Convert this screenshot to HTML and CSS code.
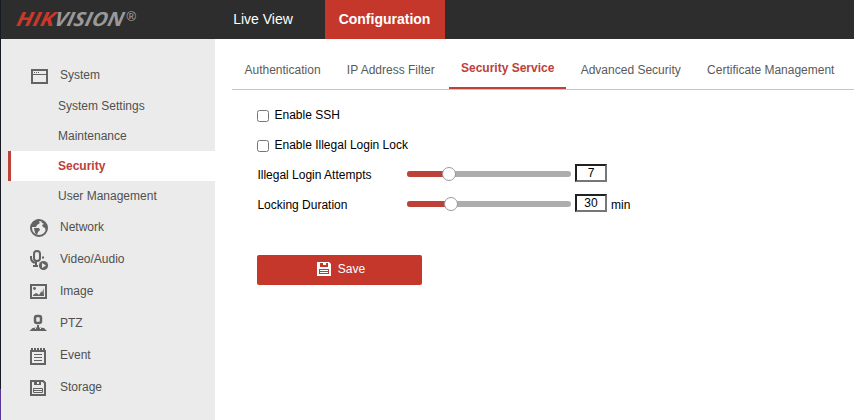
FILE: index.html
```html
<!DOCTYPE html>
<html lang="en">
<head>
<meta charset="utf-8">
<title>Configuration</title>
<link rel="stylesheet" href="styles.css">
</head>
<body>
<div class="app">
  <header class="header">
    <svg class="logo" width="136" height="39" viewBox="0 0 136 39" role="img" aria-label="HIKVISION">
      <g transform="skewX(-12)">
        <text class="logo-hik" x="6" y="26" textLength="38" lengthAdjust="spacingAndGlyphs">HIK</text>
        <text class="logo-vision" x="44" y="26" textLength="69" lengthAdjust="spacingAndGlyphs">VISION</text>
      </g>
      <text class="logo-mark" x="111.500" y="21">®</text>
    </svg>
    <nav class="topnav">
      <a class="top-link">Live View</a>
      <a class="top-link active">Configuration</a>
    </nav>
  </header>
  <div class="body">
    <aside class="sidebar">
      <div class="group">
        <svg class="icon" width="20" height="20" viewBox="0 0 20 20"><path fill="none" stroke="#636363" stroke-width="2" d="M3 5h15v13H3z"/><path stroke="#636363" d="M3 9.500h15"/><path fill="#636363" d="M5 7h1v1H5zM7 7h1v1H7zM9 7h1v1H9z"/></svg>
        <span>System</span>
      </div>
      <div class="sub">System Settings</div>
      <div class="sub">Maintenance</div>
      <div class="sub active">Security</div>
      <div class="sub">User Management</div>
      <div class="group">
        <svg class="icon" width="20" height="20" viewBox="0 0 20 20"><circle cx="10" cy="11" r="8" fill="none" stroke="#636363" stroke-width="2"/><path fill="#636363" d="M2 10 4 5l5-3 2 1-1 2 1 1-3 2-1 2H4zM5 11h5l1 2-2 2-1 3-2-2zM12 5l2-1 4 4v5l-1 1-1-3-2-1-1-2 2-1z"/></svg>
        <span>Network</span>
      </div>
      <div class="group">
        <svg class="icon" width="20" height="22" viewBox="0 0 20 22"><rect x="5" y="3" width="6" height="10" rx="3" fill="none" stroke="#636363" stroke-width="2"/><path fill="none" stroke="#636363" stroke-width="2" d="M2 8v2q0 3 3 4.500h3M14 8.500v2M7 14v3M4 18h5"/><circle cx="14.500" cy="17.500" r="4.600" fill="#636363"/><path fill="#ebebeb" d="M13 15v5l4-2.500z"/></svg>
        <span>Video/Audio</span>
      </div>
      <div class="group">
        <svg class="icon" width="20" height="20" viewBox="0 0 20 20"><path fill="none" stroke="#636363" stroke-width="2" d="M2 4h15v13H2z"/><circle cx="5.500" cy="7.500" r="1.400" fill="#636363"/><path fill="#636363" d="M4 15v-1l3-2 2 1 1 1 2.500-4 .5 2 1.500-5 .5 8z"/></svg>
        <span>Image</span>
      </div>
      <div class="group">
        <svg class="icon" width="20" height="20" viewBox="0 0 20 20"><rect x="6" y="3" width="6" height="7" rx="2" fill="none" stroke="#636363" stroke-width="2.500"/><path fill="#636363" d="M8 12h2v2.500l5 .5 3 3H.5l3-3 4.500-.5z"/><path fill="#ebebeb" d="M6 15h1v1H6zM11 15h1v1h-1z"/></svg>
        <span>PTZ</span>
      </div>
      <div class="group">
        <svg class="icon" width="20" height="20" viewBox="0 0 20 20"><path fill="none" stroke="#636363" stroke-width="2" d="M2 6h14v13H2z"/><path fill="#636363" d="M2 3h2v3H2zM5 3h2v3H5zM8 3h2v3H8zM11 3h2v3h-2zM14 3h2v3h-2z"/><path stroke="#636363" d="M5 9.500h8M5 12.500h8M5 15.500h8"/></svg>
        <span>Event</span>
      </div>
      <div class="group">
        <svg class="icon" width="20" height="20" viewBox="0 0 20 20"><path fill="none" stroke="#636363" stroke-width="2" d="M2 4h12l2 2v12H2z"/><path fill="#636363" d="M4 4h8v4H4z"/><path fill="#ebebeb" d="M4 5h1v3H4zM8 5h2v2H8z"/><path fill="none" stroke="#636363" d="M4.500 11.500h9v4h-9zM4 13.500h10"/></svg>
        <span>Storage</span>
      </div>
    </aside>
    <main class="content">
      <nav class="tabs">
        <a class="tab">Authentication</a>
        <a class="tab">IP Address Filter</a>
        <a class="tab active">Security Service</a>
        <a class="tab">Advanced Security</a>
        <a class="tab">Certificate Management</a>
      </nav>
      <form class="form">
        <label class="row"><input class="check" type="checkbox">Enable SSH</label>
        <label class="row"><input class="check" type="checkbox">Enable Illegal Login Lock</label>
        <div class="row">
          <span class="label">Illegal Login Attempts</span>
          <div class="slider"><div class="fill" style="width:42px"><i class="knob"></i></div></div>
          <input class="value" type="text" value="7">
        </div>
        <div class="row">
          <span class="label">Locking Duration</span>
          <div class="slider"><div class="fill" style="width:44px"><i class="knob"></i></div></div>
          <input class="value" type="text" value="30">
          <span class="unit">min</span>
        </div>
        <button class="save" type="button">
          <svg width="14" height="14" viewBox="0 0 14 14"><path fill="#fff" d="M0 0h12l2 2v12H0z"/><path fill="#c4372a" d="M3 1h8v4H3zM2 7h10v5H2z"/><path fill="#fff" d="M6 1h3v2H6zM3 8h8v1H3zM3 10h8v1H3z"/></svg>
          <span>Save</span>
        </button>
      </form>
    </main>
  </div>
</div>
</body>
</html>
```
FILE: styles.css
```css
* { box-sizing: border-box; }
body {
  margin: 0;
  background: #fff;
  font: 12px/16px "Liberation Sans", Arial, sans-serif;
  color: #000;
}
.app {
  height: 420px;
  display: flex;
  flex-direction: column;
  overflow: hidden;
  border-left: 1px solid;
  border-image: linear-gradient(#171b24 388px, #57379a 388px) 1;
}
.header {
  height: 39px;
  flex: none;
  display: flex;
  background: #2d2d2d;
}
.logo { margin-left: 14px; flex: none; }
.logo-hik, .logo-vision { font: italic bold 19.5px "Open Sans", sans-serif; }
.logo-hik { fill: #c8382b; }
.logo-vision { fill: #999; }
.logo-mark { font: 13px "Liberation Sans", sans-serif; fill: #aaa; }
.topnav { display: flex; margin-left: 68px; }
.top-link {
  padding: 0 14px;
  font-size: 14px;
  line-height: 38px;
  color: #fff;
}
.top-link:first-child { padding-left: 14.2px; padding-right: 13.8px; }
.top-link.active {
  width: 120px;
  margin-left: 18px;
  background: #c4372a;
  font-weight: bold;
}
.body { flex: 1; display: flex; min-height: 0; }
.sidebar {
  width: 214px;
  flex: none;
  padding-top: 20px;
  background: #ebebeb;
  color: #505050;
}
.group {
  height: 32px;
  display: flex;
  align-items: center;
  gap: 11px;
  padding-left: 28px;
  padding-right: 8px;
}
.group .icon { width: 20px; flex: none; }
.sub {
  height: 30px;
  line-height: 30px;
  margin-left: 7px;
  padding-left: 50px;
}
.sub.active {
  background: #fff;
  border-left: 3px solid #bd4039;
  padding-left: 47px;
  color: #bd4039;
  font-weight: bold;
}
.content { flex: 1; min-width: 0; padding: 10px 0 0 17px; }
.tabs {
  height: 41px;
  display: flex;
  gap: 2.3px;
  padding-left: 0.5px;
  white-space: nowrap;
  border-bottom: 1px solid #c4c4c4;
}
.tab { height: 40px; padding: 13px 12px 0; color: #5a5a5a; }
.tab.active {
  padding-top: 11px;
  border-bottom: 2px solid #bd4039;
  color: #bd4039;
  font-weight: bold;
}
.form { padding: 10px 0 0 25px; }
.row { height: 30px; display: flex; align-items: center; }
.check { width: 12px; height: 12px; margin: 2px 5.5px 0 0; }
.label { width: 150px; padding-left: 0.4px; }
.slider { width: 164px; height: 6px; margin-bottom: 2px; border-radius: 3px; background: #adadad; }
.fill {
  height: 6px;
  display: flex;
  align-items: center;
  justify-content: flex-end;
  border-radius: 3px;
  background: #bd4039;
}
.knob {
  width: 14px;
  height: 14px;
  flex: none;
  margin-right: -7px;
  border: 1px solid #999;
  border-radius: 50%;
  background: #fff;
}
.value {
  width: 32px;
  height: 18px;
  margin: 0 4px 4px;
  padding: 0;
  border: 2px inset #767676;
  font: inherit;
  text-align: center;
}
.save {
  width: 165px;
  height: 30px;
  margin-top: 35px;
  padding: 0 0 2px 3px;
  display: flex;
  align-items: center;
  justify-content: center;
  gap: 7px;
  border: 0;
  border-radius: 2px;
  background: #c4372a;
  color: #fff;
  font: inherit;
}
```
